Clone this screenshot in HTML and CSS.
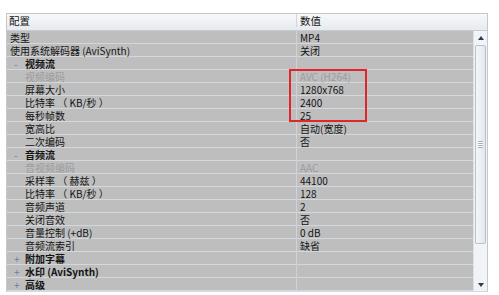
FILE: index.html
```html
<!DOCTYPE html>
<html lang="zh-CN">

<head>
	<meta charset="UTF-8">
	<title>配置</title>
	<link rel="stylesheet" href="styles.css">
</head>

<body>
	<div class="grid">
		<div class="head">
			<div class="cell">配置</div>
			<div class="cell val">数值</div>
		</div>
		<div class="main">
			<div class="rows">
				<div class="row"><div class="cell">类型</div><div class="cell val">MP4</div></div>
				<div class="row"><div class="cell">使用系统解码器 (AviSynth)</div><div class="cell val">关闭</div></div>
				<div class="row group"><div class="cell"><span class="mark">-</span><span>视频流</span></div><div class="cell val"></div></div>
				<div class="row off"><div class="cell sub">视频编码</div><div class="cell val">AVC (H264)</div></div>
				<div class="row"><div class="cell sub">屏幕大小</div><div class="cell val">1280x768</div></div>
				<div class="row"><div class="cell sub">比特率 （ KB/秒 ）</div><div class="cell val">2400</div></div>
				<div class="row"><div class="cell sub">每秒帧数</div><div class="cell val">25</div></div>
				<div class="row"><div class="cell sub">宽高比</div><div class="cell val">自动(宽度)</div></div>
				<div class="row"><div class="cell sub">二次编码</div><div class="cell val">否</div></div>
				<div class="row group"><div class="cell"><span class="mark">-</span><span>音频流</span></div><div class="cell val"></div></div>
				<div class="row off"><div class="cell sub">音视频编码</div><div class="cell val">AAC</div></div>
				<div class="row"><div class="cell sub">采样率 （ 赫兹 ）</div><div class="cell val">44100</div></div>
				<div class="row"><div class="cell sub">比特率 （ KB/秒 ）</div><div class="cell val">128</div></div>
				<div class="row"><div class="cell sub">音频声道</div><div class="cell val">2</div></div>
				<div class="row"><div class="cell sub">关闭音效</div><div class="cell val">否</div></div>
				<div class="row"><div class="cell sub">音量控制 (+dB)</div><div class="cell val">0 dB</div></div>
				<div class="row"><div class="cell sub">音频流索引</div><div class="cell val">缺省</div></div>
				<div class="row group"><div class="cell"><span class="mark">+</span><span>附加字幕</span></div><div class="cell val"></div></div>
				<div class="row group"><div class="cell"><span class="mark">+</span><span>水印 (AviSynth)</span></div><div class="cell val"></div></div>
				<div class="row group"><div class="cell"><span class="mark">+</span><span>高级</span></div><div class="cell val"></div></div>
				<div class="callout"></div>
			</div>
			<div class="scroll">
				<div class="btn up"></div>
				<div class="track">
					<div class="thumb"><span class="grip"></span></div>
				</div>
				<div class="btn down"></div>
			</div>
		</div>
	</div>
</body>

</html>
```

FILE: styles.css
```css
body {
	margin: 0;
	padding: 13px 0 0 6px;
	background: #fff;
	font-family: "Noto Sans CJK SC", "DejaVu Sans", sans-serif;
	font-size: 10px;
	color: #141414;
}

.grid {
	width: 480px;
	border: 1px solid #c3c8cf;
	border-bottom-color: #d6dae0;
}

.head {
	display: grid;
	grid-template-columns: 289px 1fr;
	height: 16px;
	background: linear-gradient(180deg, #f7f8fa, #e7eaee);
	border-bottom: 1px solid #c6ccd4;
}

.head .cell {
	line-height: 16px;
	font-size: 10.5px;
	padding-left: 2px;
}

.head .val {
	border-left: 1px solid #d2d6dc;
	padding-left: 3px;
}

.main {
	display: flex;
}

.rows {
	position: relative;
	flex: 1;
}

.row {
	display: grid;
	grid-template-columns: 289px 1fr;
	height: 13px;
	background: linear-gradient(180deg, #bebebe 0 12px, #d3d8df 12px);
}

.cell {
	display: flex;
	align-items: center;
	height: 13px;
	line-height: 13px;
	white-space: nowrap;
	padding-left: 3px;
}

.row .val {
	border-left: 1px solid #cfd3d9;
	padding-left: 3px;
}

.sub {
	padding-left: 18px;
}

.group .cell:first-child {
	font-weight: bold;
}

.mark {
	width: 15px;
	padding-left: 4px;
	color: #6a7fa8;
	font-weight: normal;
	box-sizing: border-box;
	flex: none;
}

.off .cell {
	color: #9c9c9c;
}

.callout {
	position: absolute;
	left: 282px;
	top: 38px;
	width: 74px;
	height: 49px;
	border: 2px solid #e1262a;
}

.scroll {
	width: 13px;
	display: flex;
	flex-direction: column;
	background: #f1f3f6;
	border-left: 1px solid #dde1e6;
}

.btn {
	height: 13px;
	display: flex;
	align-items: center;
	justify-content: center;
}

.up::after,
.down::after {
	content: "";
	border-left: 3px solid transparent;
	border-right: 3px solid transparent;
}

.up::after {
	border-bottom: 4px solid #2c3c52;
}

.down::after {
	border-top: 4px solid #2c3c52;
}

.track {
	flex: 1;
	padding: 1px 1px 34px;
	display: flex;
}

.thumb {
	flex: 1;
	border: 1px solid #b9c1cc;
	border-radius: 2px;
	background: linear-gradient(90deg, #f4f6f9, #e3e7ec);
	display: flex;
	align-items: center;
	justify-content: center;
}

.grip {
	width: 5px;
	height: 5px;
	border-top: 1px solid #a8b0ba;
	border-bottom: 1px solid #a8b0ba;
	background: linear-gradient(#fff 0 1px, #a8b0ba 1px 2px, #fff 2px 3px, #a8b0ba 3px 4px, #fff 4px);
}
```
